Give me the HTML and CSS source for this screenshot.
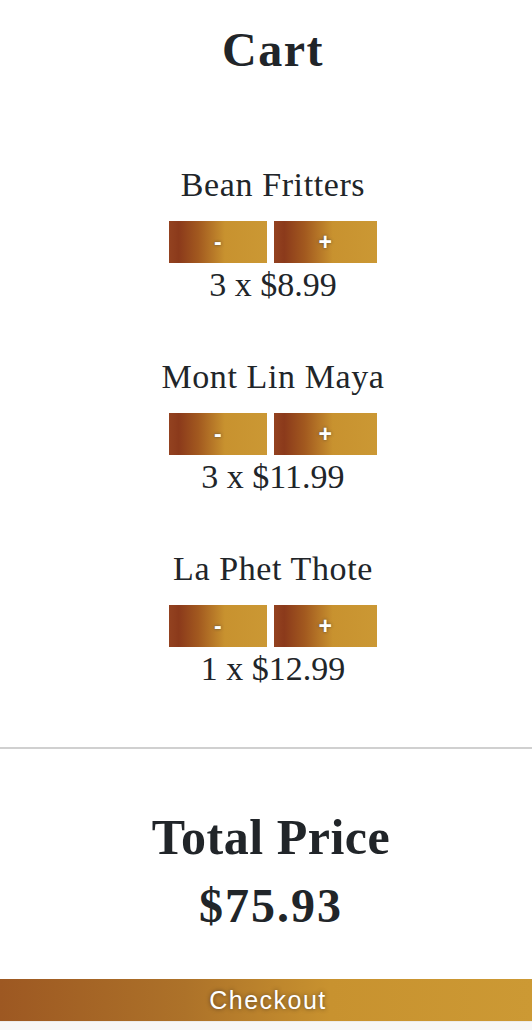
FILE: index.html
```html
<!DOCTYPE html>
<html lang="en">
<head>
<meta charset="utf-8">
<title>Cart</title>
<link rel="stylesheet" href="styles.css">
</head>
<body>
<main class="page">
  <div class="content">
    <h1 class="title">Cart</h1>
    <ul class="items">
      <li class="item">
        <div class="item-name">Bean Fritters</div>
        <div class="qty">
          <button class="qty-btn">-</button>
          <button class="qty-btn">+</button>
        </div>
        <div class="item-price">3 x $8.99</div>
      </li>
      <li class="item">
        <div class="item-name">Mont Lin Maya</div>
        <div class="qty">
          <button class="qty-btn">-</button>
          <button class="qty-btn">+</button>
        </div>
        <div class="item-price">3 x $11.99</div>
      </li>
      <li class="item">
        <div class="item-name">La Phet Thote</div>
        <div class="qty">
          <button class="qty-btn">-</button>
          <button class="qty-btn">+</button>
        </div>
        <div class="item-price">1 x $12.99</div>
      </li>
    </ul>
  </div>
  <hr class="divider">
  <section class="total">
    <h2 class="total-label">Total Price</h2>
    <div class="total-value">$75.93</div>
  </section>
  <button class="checkout">Checkout</button>
  <div class="footer-strip"></div>
</main>
</body>
</html>
```
FILE: styles.css
```css
* { box-sizing: border-box; }
html, body { margin: 0; padding: 0; background: #ffffff; }
body {
  color: #212529;
  font-family: "Liberation Serif", "Times New Roman", serif;
}
.page {
  display: flex;
  flex-direction: column;
  align-items: stretch;
  min-height: 1030px;
}
.content {
  display: flex;
  flex-direction: column;
  align-items: center;
  padding-left: 14px;
}
.title {
  margin: 20px 0 0;
  font-family: "Liberation Serif", serif;
  font-weight: 700;
  font-size: 48px;
  line-height: 60px;
  letter-spacing: 1.5px;
}
.items {
  list-style: none;
  margin: 85px 0 0;
  padding: 0;
  display: flex;
  flex-direction: column;
  gap: 50px;
  align-items: center;
}
.item {
  display: flex;
  flex-direction: column;
  align-items: center;
}
.item-name {
  font-size: 34px;
  line-height: 40px;
  letter-spacing: 0.6px;
  margin-bottom: 16px;
}
.qty {
  display: flex;
  gap: 7px;
}
.qty-btn {
  height: 42px;
  padding: 0 45px;
  border: 0;
  border-radius: 0;
  color: #ffffff;
  font-family: "Liberation Sans", Arial, sans-serif;
  font-weight: 700;
  font-size: 23px;
  line-height: 42px;
  text-shadow: 0 0 3px rgba(60, 60, 60, 0.8);
  background: linear-gradient(90deg, #934220 0%, #8b3a1b 10%, #a2591f 30%, #c8922f 57%, #cb9834 100%);
  cursor: pointer;
}
.item-price {
  font-size: 34px;
  line-height: 44px;
}
.divider {
  width: 100%;
  margin: 56px 0 0;
  border: 0;
  height: 2px;
  background: #d0d0d0;
}
.total {
  margin-top: 60px;
  padding-left: 10px;
  display: flex;
  flex-direction: column;
  align-items: center;
}
.total-label {
  margin: 0;
  font-weight: 700;
  font-size: 50px;
  line-height: 56px;
  letter-spacing: 0.5px;
}
.total-value {
  margin-top: 13px;
  font-weight: 700;
  font-size: 48px;
  line-height: 56px;
  letter-spacing: 2px;
}
.checkout {
  margin-top: 45px;
  width: 100%;
  height: 42px;
  padding: 0 0 0 4px;
  border: 0;
  color: #ffffff;
  font-family: "Liberation Sans", Arial, sans-serif;
  font-size: 25px;
  letter-spacing: 1.5px;
  line-height: 42px;
  text-shadow: 0 0 4px rgba(50, 40, 30, 0.7);
  background: linear-gradient(90deg, #9d5822 0%, #ad7229 35%, #c8922f 62%, #cc9934 100%);
  cursor: pointer;
}
.footer-strip {
  width: 100%;
  flex: 1;
  background: #f7f7f7;
  border-top: 1px solid #ececec;
}
```
